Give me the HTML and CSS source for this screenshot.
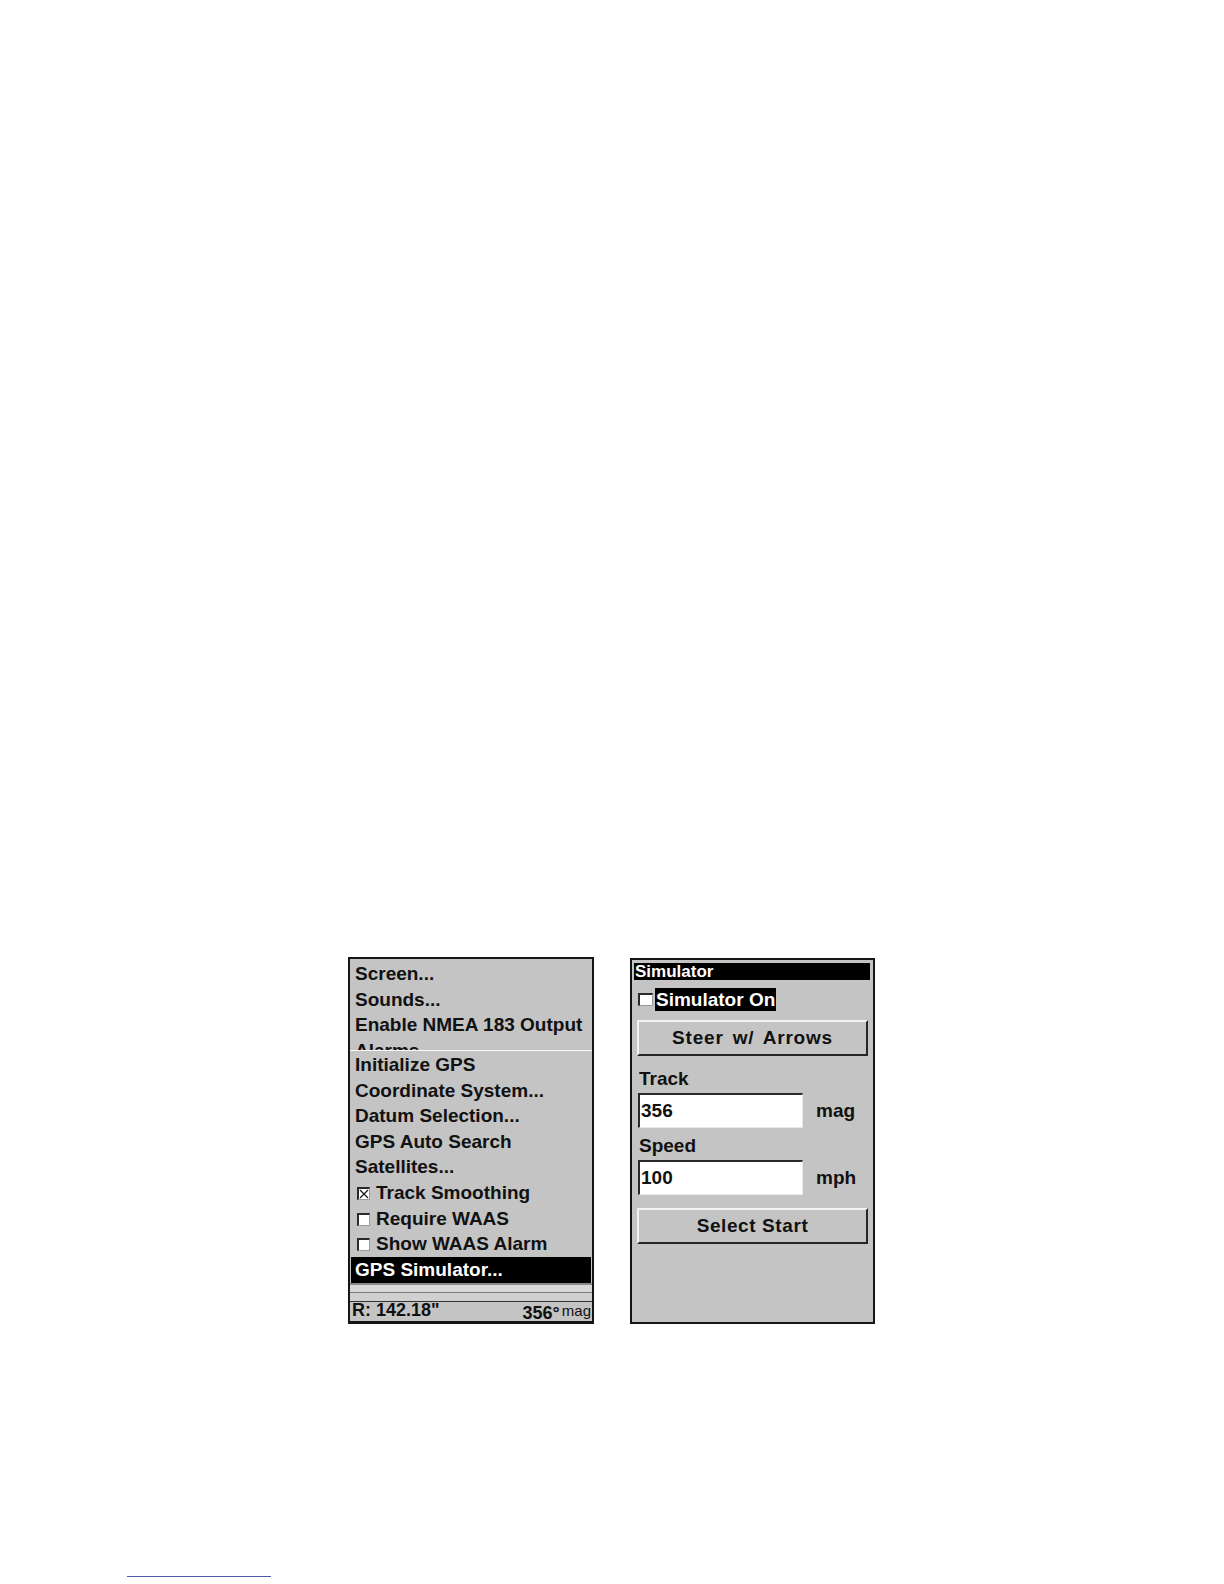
FILE: index.html
```html
<!DOCTYPE html>
<html>
<head>
<meta charset="utf-8">
<link rel="stylesheet" href="styles.css">
</head>
<body>
<div class="page">
  <div class="screens">
    <div class="panel menu-panel">
      <div class="main-menu">
        <div class="item">Screen...</div>
        <div class="item">Sounds...</div>
        <div class="item">Enable NMEA 183 Output</div>
        <div class="item">Alarms...<span class="more">.</span></div>
      </div>
      <div class="submenu">
        <div class="item">Initialize GPS</div>
        <div class="item">Coordinate System...</div>
        <div class="item">Datum Selection...</div>
        <div class="item">GPS Auto Search</div>
        <div class="item">Satellites...</div>
        <div class="item"><span class="cb"><svg class="x" viewBox="0 0 10 10"><path d="M1 1 L9 9 M9 1 L1 9" /></svg></span>Track Smoothing</div>
        <div class="item"><span class="cb"></span>Require WAAS</div>
        <div class="item"><span class="cb"></span>Show WAAS Alarm</div>
        <div class="item selected">GPS Simulator...</div>
      </div>
      <div class="status-gap"><div class="gap-a"></div><div class="gap-b"></div></div>
      <div class="status"><span>R: 142.18"</span><span>356°<span class="unit">mag</span></span></div>
    </div>
    <div class="panel sim-panel">
      <div class="title">Simulator</div>
      <div class="sim-on"><span class="cb cb-lg"></span><span class="hl">Simulator On</span></div>
      <div class="button steer">Steer w/ Arrows</div>
      <div class="label label-track">Track</div>
      <div class="field"><div class="input">356</div><span class="units">mag</span></div>
      <div class="label label-speed">Speed</div>
      <div class="field"><div class="input">100</div><span class="units">mph</span></div>
      <div class="button start">Select Start</div>
    </div>
  </div>
  <div class="footer-line"></div>
</div>
</body>
</html>
```
FILE: styles.css
```css
html, body {
  margin: 0;
  padding: 0;
  background: #ffffff;
}
.page {
  width: 1224px;
  height: 1584px;
  overflow: hidden;
  font-family: "Liberation Sans", Arial, sans-serif;
  font-weight: bold;
  color: #111111;
}
.screens {
  display: flex;
  align-items: flex-start;
  gap: 36px;
  padding: 957px 0 0 348px;
}
.panel {
  box-sizing: border-box;
  background: #c4c4c4;
  border: 2px solid #151515;
}
.menu-panel {
  width: 246px;
  height: 367px;
  display: flex;
  flex-direction: column;
  font-size: 19px;
  border-bottom-width: 3px;
}
.main-menu {
  height: 91px;
  flex-shrink: 0;
  box-sizing: border-box;
  padding-top: 2px;
  overflow: hidden;
}
.item {
  position: relative;
  height: 25.6px;
  line-height: 25.6px;
  padding-left: 5px;
  white-space: nowrap;
}
.more {
  position: absolute;
  right: 14px;
  top: 0;
}
.submenu {
  flex-shrink: 0;
  border-top: 1px solid #f8f8f8;
  padding-top: 1px;
}
.cb {
  display: inline-block;
  box-sizing: border-box;
  width: 13px;
  height: 13px;
  background: #ffffff;
  border-top: 2px solid #2a2a2a;
  border-left: 2px solid #2a2a2a;
  border-right: 1px solid #9a9a9a;
  border-bottom: 1px solid #9a9a9a;
  margin-left: 2px;
  margin-right: 6px;
  vertical-align: -1px;
  position: relative;
}
.cb .x {
  position: absolute;
  left: 0;
  top: 0;
  width: 10px;
  height: 10px;
  stroke: #222;
  stroke-width: 1.4;
  fill: none;
}
.item.selected {
  margin: 0 1px 0 1px;
  padding-left: 4px;
  height: 26px;
  line-height: 26px;
  background: #000000;
  color: #ffffff;
}
.status-gap {
  flex-shrink: 0;
  border-top: 2px solid #8a8a8a;
  border-bottom: 1px solid #333333;
}
.gap-a {
  height: 7px;
  background: #d8d8d8;
  border-bottom: 1px solid #7a7a7a;
}
.gap-b {
  height: 8px;
  background: #d0d0d0;
}
.status {
  flex: 1;
  min-height: 0;
  overflow: hidden;
  display: flex;
  justify-content: space-between;
  font-size: 18px;
  line-height: 17px;
  padding: 0 1px 0 2px;
  white-space: nowrap;
}
.status .unit {
  font-size: 15px;
  font-weight: normal;
  margin-left: 2px;
  vertical-align: 3px;
}
.sim-panel {
  width: 245px;
  height: 366px;
  margin-top: 1px;
  display: flex;
  flex-direction: column;
  font-size: 19px;
}
.title {
  margin: 3px 3px 0 2px;
  height: 17px;
  line-height: 17px;
  font-size: 17px;
  background: #000000;
  color: #ffffff;
  padding-left: 1px;
}
.sim-on {
  margin-top: 8px;
  height: 23px;
  display: flex;
  align-items: center;
}
.cb-lg {
  width: 15px;
  height: 13px;
  margin-left: 6px;
  margin-right: 2px;
}
.hl {
  background: #000000;
  color: #ffffff;
  line-height: 23px;
  padding: 0 1px;
}
.button {
  box-sizing: border-box;
  margin: 9px 5px 0 5px;
  height: 36px;
  line-height: 32px;
  text-align: center;
  border-top: 2px solid #f2f2f2;
  border-left: 2px solid #f2f2f2;
  border-right: 2px solid #262626;
  border-bottom: 2px solid #262626;
  white-space: nowrap;
}
.steer {
  letter-spacing: 0.8px;
  word-spacing: 3px;
}
.start {
  margin-top: 13px;
  letter-spacing: 0.6px;
}
.label {
  height: 22px;
  line-height: 22px;
  padding-left: 7px;
}
.label-track {
  margin-top: 12px;
  margin-bottom: 3px;
}
.label-speed {
  margin-top: 7px;
  margin-bottom: 3px;
}
.field {
  display: flex;
  align-items: center;
  margin-left: 6px;
}
.input {
  box-sizing: border-box;
  width: 165px;
  height: 35px;
  line-height: 32px;
  background: #ffffff;
  border-top: 2px solid #2a2a2a;
  border-left: 2px solid #2a2a2a;
  border-right: 1px solid #e8e8e8;
  border-bottom: 1px solid #e8e8e8;
  padding-left: 1px;
}
.units {
  margin-left: 13px;
}
.footer-line {
  margin: 252px 0 0 127px;
  width: 144px;
  height: 1px;
  background: #4a5aa8;
}
```
